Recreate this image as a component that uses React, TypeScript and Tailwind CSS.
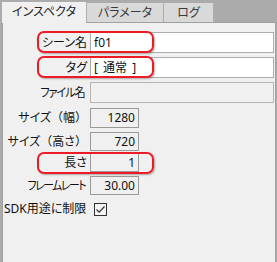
const font = {
  fontFamily: '"Noto Sans", "Noto Sans CJK JP", sans-serif',
  fontFeatureSettings: '"palt"',
};

function Tab({ label, active, w }: { label: string; active?: boolean; w: string }) {
  if (active) {
    return (
      <div
        className={`relative z-10 -mb-px flex h-[22px] items-center justify-center border border-b-0 border-[#acacac] bg-[#f0f0f0] pb-[1px] text-[12px] text-[#222] ${w}`}
      >
        {label}
      </div>
    );
  }
  return (
    <div
      className={`-ml-px flex h-[20px] items-center justify-center border border-b-0 border-[#acacac] bg-[#d9d9d9] text-[12px] text-[#3a3a3a] ${w}`}
    >
      {label}
    </div>
  );
}

// full-width parentheses keep their em box, like the original UI font
const Paren = ({ c }: { c: string }) => <span className="[font-feature-settings:normal]">{c}</span>;

function Row({
  label,
  value,
  kind,
  className,
}: {
  label: React.ReactNode;
  value?: string;
  kind: "wide" | "disabled" | "num";
  className: string;
}) {
  return (
    <div className={`flex items-stretch ${className}`}>
      <div className="flex w-[85px] items-center justify-end pr-[1px] text-[12px] text-[#111]">{label}</div>
      {kind === "wide" && (
        <div className="ml-[2px] flex flex-1 items-center border border-[#abadb3] bg-white pl-[3px] text-[12px] text-[#111] [word-spacing:2px]">
          {value}
        </div>
      )}
      {kind === "disabled" && <div className="ml-[2px] flex-1 border border-[#b4b4b4] bg-[#f0f0f0]" />}
      {kind === "num" && (
        <div className="ml-[2px] flex w-[49px] items-center justify-end border border-[#9a9a9a] bg-[#f0f0f0] pr-[3px] text-[12px] text-[#111]">
          {value}
        </div>
      )}
    </div>
  );
}

function Mark({ top }: { top: string }) {
  return (
    <div
      className={`pointer-events-none absolute left-[37px] h-[22px] w-[117px] rounded-[7px] border-2 border-[#ec1c24] shadow-[1px_1px_2px_rgba(0,0,0,0.3)] ${top}`}
    />
  );
}

export default function App() {
  return (
    <div className="relative h-[262px] w-[277px] overflow-hidden bg-[#ababab]" style={font}>
      <div className="flex h-[22px] items-end pl-[1px]">
        <Tab label="インスペクタ" active w="w-[86px]" />
        <Tab label="パラメータ" w="w-[78px]" />
        <Tab label="ログ" w="w-[51px]" />
      </div>

      <div className="ml-[2px] flex h-[240px] w-[274px] flex-col border border-b-0 border-[#a0a0a0] bg-[#f0f0f0] pr-[1px]">
        <Row label="シーン名" value="f01" kind="wide" className="mt-[9px] h-[21px]" />
        <Row label="タグ" value="[ 通常 ]" kind="wide" className="mt-[4px] h-[21px]" />
        <Row
          label={<span className="mr-[2px] inline-block origin-right scale-x-[0.93] tracking-[-1.2px]">ファイル名</span>}
          kind="disabled"
          className="mt-[4px] h-[21px]"
        />
        <Row
          label={
            <>
              サイズ<Paren c="（" />幅<Paren c="）" />
            </>
          }
          value="1280"
          kind="num"
          className="mt-[5px] h-[20px]"
        />
        <Row
          label={
            <>
              サイズ<Paren c="（" />高さ<Paren c="）" />
            </>
          }
          value="720"
          kind="num"
          className="mt-[4px] h-[19px]"
        />
        <Row label="長さ" value="1" kind="num" className="mt-[2px] h-[19px]" />
        <Row
          label={<span className="mr-[2px] inline-block origin-right scale-x-[0.9] tracking-[-1.5px]">フレームレート</span>}
          value="30.00"
          kind="num"
          className="mt-[4px] h-[19px]"
        />
        <div className="mt-[6px] flex h-[16px] items-center pl-[1px]">
          <span className="w-[90px] whitespace-nowrap text-[12px] text-[#111]">SDK用途に制限</span>
          <span className="flex h-[13px] w-[13px] items-center justify-center border border-[#333] bg-[#f4f4f4]">
            <svg width="11" height="11" viewBox="0 0 11 11">
              <path d="M1.5 5.5 L4.2 8.2 L9.5 2.5" fill="none" stroke="#333" strokeWidth="1.2" />
            </svg>
          </span>
        </div>
      </div>

      <Mark top="top-[31px]" />
      <Mark top="top-[56px]" />
      <Mark top="top-[152px]" />
    </div>
  );
}
